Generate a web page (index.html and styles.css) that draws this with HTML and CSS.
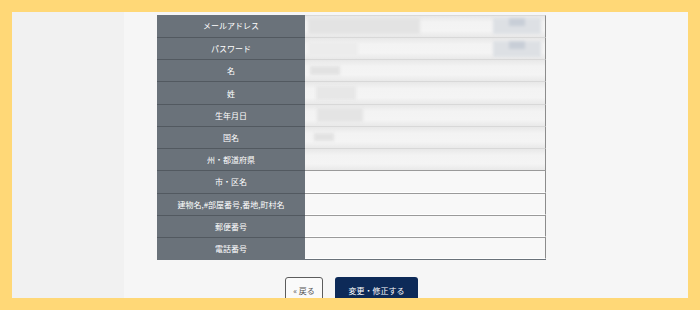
FILE: index.html
```html
<!DOCTYPE html>
<html lang="ja">
<head>
<meta charset="utf-8">
<link rel="stylesheet" href="styles.css">
</head>
<body>
<div class="frame">
  <div class="screen">
    <aside class="side"></aside>
    <main class="main">
      <div class="form">
        <div class="th first">メールアドレス</div>
        <div class="td blur first"><span class="blob b-mail"></span><span class="blob b-right"><i></i></span></div>
        <div class="th">パスワード</div>
        <div class="td blur"><span class="blob b-pass"></span><span class="blob b-right"><i></i></span></div>
        <div class="th">名</div>
        <div class="td blur"><span class="blob b-name"></span></div>
        <div class="th">姓</div>
        <div class="td blur"><span class="blob b-sei"></span></div>
        <div class="th">生年月日</div>
        <div class="td blur"><span class="blob b-birth"></span></div>
        <div class="th">国名</div>
        <div class="td blur"><span class="blob b-country"></span></div>
        <div class="th">州・都道府県</div>
        <div class="td blur"></div>
        <div class="th">市・区名</div>
        <div class="td empty"></div>
        <div class="th">建物名,#部屋番号,番地,町村名</div>
        <div class="td empty"></div>
        <div class="th">郵便番号</div>
        <div class="td empty"></div>
        <div class="th">電話番号</div>
        <div class="td empty"></div>
      </div>
      <div class="actions">
        <button class="btn back">« 戻る</button>
        <button class="btn submit">変更・修正する</button>
      </div>
    </main>
  </div>
</div>
</body>
</html>
```
FILE: styles.css
```css
html, body {
  margin: 0;
  padding: 0;
}
body {
  width: 700px;
  height: 310px;
  background: #ffd877;
  font-family: "Noto Sans CJK JP", "Noto Sans", sans-serif;
  overflow: hidden;
}
.frame {
  box-sizing: border-box;
  height: 310px;
  padding: 12px 12px 12px 12px;
}
.screen {
  display: grid;
  grid-template-columns: 112px 1fr;
  height: 286px;
  overflow: hidden;
}
.side {
  background: #f1f1f1;
}
.main {
  background: #f6f6f6;
  padding: 2.7px 0 0 33px;
}
.form {
  display: grid;
  grid-template-columns: 148px 241px;
  grid-auto-rows: 22.24px;
  width: 389px;
  border-bottom: 1px solid #6a727a;
}
.th {
  background: #6a727a;
  color: #fff;
  font-size: 8px;
  display: flex;
  align-items: center;
  justify-content: center;
  border-top: 1px solid #525960;
  box-sizing: border-box;
  white-space: nowrap;
}
.th.first {
  border-top: none;
}
.td {
  box-sizing: border-box;
  border-right: 1px solid #8c8c8c;
  border-top: 1px solid #9a9a9a;
  display: flex;
  align-items: center;
  justify-content: space-between;
  padding: 0 4px 0 3px;
  position: relative;
}
.td.first {
  border-top: 1px solid #9a9a9a;
}
.td.blur {
  border-top-color: #d8d8d8;
  background: linear-gradient(#e8e8e8, #f3f3f3 30%, #f4f4f4 70%, #e9e9e9);
}
.td.empty {
  background: #f8f8f8;
  border-bottom: 1px solid #fff;
}
.blob {
  display: block;
  filter: blur(1.5px);
  background: #e2e2e2;
}
.b-mail { width: 112px; height: 16px; background: #e3e3e3; }
.b-pass { width: 50px; height: 14px; background: #ececec; }
.b-right {
  width: 48px;
  height: 16px;
  background: #dde0e4;
  display: flex;
  justify-content: center;
}
.b-right i {
  display: block;
  width: 16px;
  height: 8px;
  background: #c8ced7;
}
.b-name { width: 30px; height: 9px; margin-left: 2px; }
.b-sei { width: 40px; height: 14px; margin-left: 8px; background: #e7e7e7; }
.b-birth { width: 46px; height: 14px; margin-left: 9px; background: #e4e4e4; }
.b-country { width: 20px; height: 8px; margin-left: 6px; }
.actions {
  width: 389px;
  display: flex;
  justify-content: center;
  gap: 12px;
  margin-top: 17px;
}
.btn {
  box-sizing: border-box;
  height: 26px;
  font-family: inherit;
  font-size: 8px;
  border-radius: 3px;
  padding: 0;
  cursor: pointer;
}
.back {
  width: 38px;
  background: #fafafa;
  border: 1px solid #5c5c5c;
  color: #555;
}
.submit {
  width: 83px;
  background: #0d2a58;
  border: none;
  color: #fff;
}
```
